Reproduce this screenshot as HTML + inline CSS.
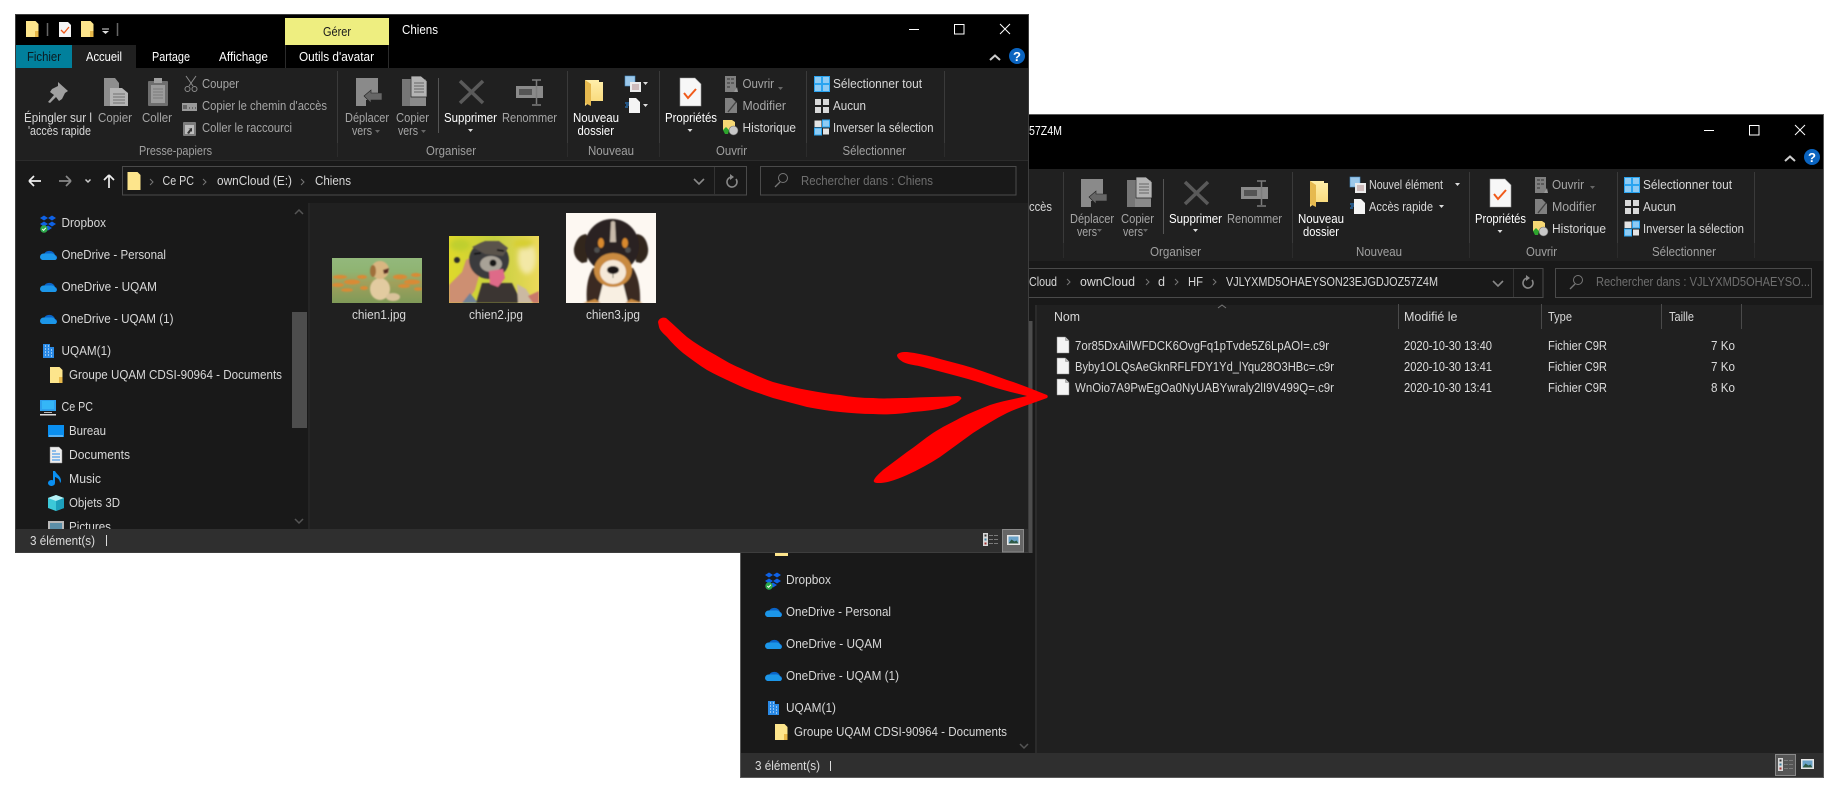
<!DOCTYPE html>
<html lang="fr"><head><meta charset="utf-8"><title>Chiens</title>
<style>
html,body{margin:0;padding:0;background:#fff;width:1830px;height:793px;overflow:hidden}
svg{display:block}
text{font-family:"Liberation Sans",sans-serif;font-size:13px;fill:#e4e4e4}
.w{fill:#fff}.d{fill:#a6a6a6}.g{fill:#a0a0a0}.k{fill:#1a1a1a}.m{fill:#6f6f6f}.n{fill:#dcdcdc}
.a{fill:#d8d8d8}
</style></head><body>
<svg width="1830" height="793" viewBox="0 0 1830 793" xmlns="http://www.w3.org/2000/svg">
<defs>
<linearGradient id="fy" x1="0" y1="0" x2="0" y2="1"><stop offset="0" stop-color="#ffeeaa"/><stop offset="1" stop-color="#f8d775"/></linearGradient>
<linearGradient id="c1" x1="0" y1="0" x2="0" y2="1"><stop offset="0" stop-color="#93b87c"/><stop offset=".3" stop-color="#8fb472"/><stop offset=".55" stop-color="#a0a05c"/><stop offset="1" stop-color="#7f9a58"/></linearGradient>
<linearGradient id="c2" x1="0" y1="0" x2="1" y2="0"><stop offset="0" stop-color="#dfd92a"/><stop offset=".5" stop-color="#c4cf3e"/><stop offset="1" stop-color="#ecd95a"/></linearGradient>
<filter id="b" x="-10%" y="-10%" width="120%" height="120%"><feGaussianBlur stdDeviation=".8"/></filter>
<filter id="b2" x="-20%" y="-20%" width="140%" height="140%"><feGaussianBlur stdDeviation="2.500"/></filter>
<clipPath id="cp1"><rect x="332" y="258" width="90" height="45"/></clipPath>
<clipPath id="cp2"><rect x="449" y="236" width="90" height="67"/></clipPath>
<clipPath id="cp3"><rect x="566" y="213" width="90" height="90"/></clipPath>
<clipPath id="navclip"><rect x="16" y="203" width="292" height="326"/></clipPath>

<g id="i-pin"><path d="M58 82l10 9-3 2-3 6-3 2-3-4-6 6-2-1 6-7-4-3 2-3 6-3z" fill="#a0a0a0"/></g>
<g id="i-copy"><path d="M104 78h11l4 5v7h-8v16h-7z" fill="#8e8e8e"/><path d="M110 88h12l6 5v13h-18z" fill="#b4b4b4"/><path d="M113 94h12M113 97h12M113 100h12M113 103h12" stroke="#707070" stroke-width="1"/></g>
<g id="i-paste"><rect x="148" y="81" width="20" height="25" rx="1" fill="#6e6e6e"/><rect x="154" y="78" width="8" height="5" fill="#a0a0a0"/><rect x="151" y="85" width="14" height="18" fill="#9c9c9c"/><path d="M153 89h10M153 92h10M153 95h10M153 98h10" stroke="#7c7c7c"/></g>
<g id="i-sc" fill="none" stroke="#8c8c8c" stroke-width="1"><path d="M186 76l7 10M196 76l-7 10"/><circle cx="187.500" cy="89" r="2.500"/><circle cx="194.500" cy="89" r="2.500"/></g>
<g id="i-pt"><rect x="182" y="103" width="15" height="8" fill="#9a9a9a"/><path d="M184 105v4M186 105v4M189 108h1M192 108h1M195 108h1" stroke="#333" stroke-width="1"/></g>
<g id="i-sh"><rect x="183" y="122" width="13" height="14" rx="1" fill="#7c7c7c"/><rect x="185" y="125" width="9" height="9" fill="#bdbdbd"/><path d="M187 133l3-4-2 0 4-1v4l-1-1-2 3z" fill="#333"/></g>
<g id="i-mv"><path d="M356 78h22v22h-12v6h-10z" fill="#8a8a8a"/><path d="M364 96l7-6v3h11v7h-11v3z" fill="#666" stroke="#202020" stroke-width=".6"/></g>
<g id="i-cp"><path d="M402 79h24v27h-24z" fill="#8a8a8a"/><path d="M402 79h8v27h-8z" fill="#767676"/><path d="M411 76h10l6 5v16h-16z" fill="#b4b4b4" stroke="#202020" stroke-width=".7"/><path d="M414 83h10M414 86h10M414 89h10M414 92h10" stroke="#666"/></g>
<g id="i-x"><path d="M460 81l23 22M483 81l-23 22" stroke="#5a5a5a" stroke-width="3.500" fill="none"/></g>
<g id="i-rn"><rect x="516" y="86" width="27" height="12" fill="#8a8a8a"/><rect x="519" y="89" width="13" height="6" fill="#555"/><path d="M532 80h9M536.500 80v24M532 105h9" stroke="#7c7c7c" stroke-width="1.500" fill="none"/></g>
<g id="i-fo"><path d="M585 80h14v2h4v19h-12l-6 5z" fill="url(#fy)"/><path d="M585 80l6 4v22l-6-3z" fill="#e6b94f"/></g>
<g id="i-ouv"><rect x="725" y="76" width="11" height="16" fill="#808080"/><path d="M727 79h3M727 83h3M727 87h3M731 79h3M731 83h3" stroke="#333"/><path d="M734 92l3-5 1 5z" fill="#999"/></g>
<g id="i-mod"><path d="M725 98h7l5 5v10h-12z" fill="#808080"/><path d="M728 112l8-10" stroke="#444" stroke-width="1.400"/></g>
<g id="i-his"><path d="M723 120h9l3 2v8h-12z" fill="#f5d774"/><circle cx="733.500" cy="130.500" r="4.500" fill="#c8c8c8" stroke="#666" stroke-width=".6"/><path d="M723 130l3-3 3 3-1 4h-3z" fill="#2da52d"/></g>
<g id="i-all" fill="#8ecbf4" stroke="#2aa4f0" stroke-width="1"><rect x="814.500" y="76.500" width="7" height="7"/><rect x="822.500" y="76.500" width="7" height="7"/><rect x="814.500" y="84.500" width="7" height="7"/><rect x="822.500" y="84.500" width="7" height="7"/></g>
<g id="i-non" fill="#d8d8d8"><rect x="815" y="99" width="6" height="6"/><rect x="823" y="99" width="6" height="6"/><rect x="815" y="107" width="6" height="6"/><rect x="823" y="107" width="6" height="6"/></g>
<g id="i-inv" stroke-width="1"><rect x="814.500" y="120.500" width="7" height="6.500" fill="#e4e4e4"/><rect x="822.500" y="120" width="7" height="7" fill="#8ecbf4" stroke="#2aa4f0"/><rect x="814.500" y="128" width="7" height="7" fill="#8ecbf4" stroke="#2aa4f0"/><rect x="823" y="128.500" width="6" height="6" fill="#e4e4e4"/></g>
<g id="i-prop"><path d="M680 78h15l6 6v22h-21z" fill="#f7f7f7" stroke="#9a9a9a" stroke-width=".6"/><path d="M684 93l4 5 8-9" fill="none" stroke="#f05a1a" stroke-width="2"/></g>
<g id="i-new"><rect x="625" y="76" width="10" height="10" fill="#9cc8ea" stroke="#4a8fc8" stroke-width=".6"/><rect x="630" y="82" width="11" height="10" fill="#ececec"/><path d="M632 85h7M632 87h7M632 89h7" stroke="#b08a8a"/></g>
<g id="i-eas"><path d="M629 98h7l4 4v11h-11z" fill="#f4f4f4"/><path d="M625 103h4M626 105h3M625 107h3" stroke="#2a8ae6"/></g>
<g id="i-dbx"><path d="M40 218l4-2.500 4 2.500-4 2.500zM48 218l4-2.500 4 2.500-4 2.500zM40 224l4-2.500 4 2.500-4 2.500zM48 224l4-2.500 4 2.500-4 2.500zM44 228l4-2.500 4 2.500-4 2.500z" fill="#0f62e6"/><circle cx="44" cy="229" r="3.700" fill="#2da84a"/><path d="M42.300 229l1.300 1.300 2.200-2.500" stroke="#fff" fill="none"/></g>
<g id="i-od"><path d="M44 260h10a2.500 2.500 0 0 0 1-5 6 6 0 0 0-11-1 4 4 0 0 0-2 6z" fill="#0a64c8"/><path d="M40 257a3.500 3.500 0 0 1 4-3.500h6a6 6 0 0 1 6 3 2 2 0 0 1-1 3.500H43a3 3 0 0 1-3-3z" fill="#1c96e8"/></g>
<g id="i-bld"><path d="M43 344h7v3h4v11H43z" fill="#2a8ae6"/><path d="M45 346h1M48 346h1M45 349h1M48 349h1M45 352h1M48 352h1M51 350h1M51 353h1M51 356h1M45 355h1M48 355h1" stroke="#fff"/></g>
<g id="i-fl"><path d="M50 367h9.500l3 3v13H50z" fill="#fde58c"/><path d="M59 383h3.500v-6H59z" fill="#e8b94a"/></g>
<g id="i-pc"><rect x="40" y="400" width="16" height="11" fill="#2ea0ee"/><path d="M42 401h12v8H42z" fill="#35b6f7"/><path d="M44 412h8v1H44z" fill="#bbb"/><path d="M40 414h16v1.500H40z" fill="#ddd"/></g>
<g id="i-de"><rect x="48" y="425" width="16" height="12" fill="#0a8ff0"/><path d="M49 436h14" stroke="#cdeaff" stroke-width=".8"/></g>
<g id="i-doc"><path d="M50 447h9l3 3v13H50z" fill="#eee" stroke="#888" stroke-width=".5"/><path d="M52 451h4M52 454h8M52 457h8M52 460h8" stroke="#2a8ae6"/></g>
<g id="i-mu"><path d="M55 471v12a3.500 3 0 1 1-2-2.700V471zM55 471c2 4 6 5 6 10 0 1-1 2-1 2 0-3-2-5-5-6z" fill="#0a8ff0"/></g>
<g id="i-3d"><path d="M56 495l8 3v10l-8 3-8-3v-10z" fill="#3cc8d8"/><path d="M48 498l8 3 8-3-8-3z" fill="#b6f0f4"/><path d="M56 501v10l8-3v-10z" fill="#1da0bc"/></g>
<g id="i-file"><path d="M0 0h8.500l3.500 3.500V16H0z" fill="#f4f4f4" stroke="#8a8a8a" stroke-width=".5"/><path d="M8.500 0v3.500H12" fill="#bbb" stroke="#8a8a8a" stroke-width=".5"/></g>
<g id="i-list"><rect x="0" y="0" width="5" height="13" fill="#d8d8d8"/><rect x="1.500" y="1.500" width="2" height="2" fill="#333"/><rect x="1.500" y="5.500" width="2" height="2" fill="#3a7a9a"/><rect x="1.500" y="9.500" width="2" height="2" fill="#a03030"/><path d="M6 2.500h4M11 2.500h4M6 6.500h4M11 6.500h4M6 10.500h4M11 10.500h4" stroke="#7a7a7a"/></g>
<g id="i-big"><rect x="0" y="0" width="13" height="10" fill="#e8e8e8"/><rect x="1.500" y="1.500" width="10" height="7" fill="#6aa2c8"/><path d="M1.500 8.500l3-4 3 2 2-1 2 3z" fill="#2e5a46"/></g>
</defs>

<rect width="1830" height="793" fill="#fff"/>

<!-- WINDOW 2 -->
<rect x="740" y="114" width="1084" height="664" fill="#5a5a5a"/>
<rect x="741" y="115" width="1082" height="54" fill="#000"/>
<rect x="741" y="169" width="1082" height="92" fill="#202020"/>
<rect x="741" y="261" width="1082" height="44" fill="#191919"/>
<rect x="741" y="305" width="294" height="448" fill="#191919"/>
<rect x="1035" y="305" width="788" height="448" fill="#202020"/>
<rect x="1035" y="305" width="2" height="448" fill="#2b2b2b"/>
<rect x="1029" y="321" width="3.500" height="232" fill="#4d4d4d"/>
<rect x="741" y="753" width="1082" height="24" fill="#2f2f2f"/>

<text x="1029" y="135" textLength="33" lengthAdjust="spacingAndGlyphs" class="w">57Z4M</text>
<path d="M1704 130.500h10" stroke="#fff"/><rect x="1749.500" y="125.500" width="9.500" height="9.500" fill="none" stroke="#fff"/><path d="M1795 125l10 10M1805 125l-10 10" stroke="#fff"/>
<path d="M1785 161l5-4.500 5 4.500" stroke="#ccc" stroke-width="2" fill="none"/>
<circle cx="1812" cy="157" r="8" fill="#0a64c0"/><text x="1808" y="162" textLength="8" lengthAdjust="spacingAndGlyphs" class="w" style="font-weight:700">?</text>

<g stroke="#3a3a3a"><path d="M1063.500 172v71M1292.500 172v71M1469.500 172v71M1617.500 172v71M1754.500 172v71"/><path d="M1163.500 179v55" stroke="#555"/></g>
<g stroke="#2c2c2c"><path d="M1063.500 243v15M1292.500 243v15M1469.500 243v15M1617.500 243v15M1754.500 243v15"/></g>
<g transform="translate(725,101)"><use href="#i-mv"/><use href="#i-cp"/><use href="#i-x"/><use href="#i-rn"/><use href="#i-fo"/><use href="#i-new"/><use href="#i-eas"/></g>
<g transform="translate(810,101)"><use href="#i-prop"/><use href="#i-ouv"/><use href="#i-mod"/><use href="#i-his"/><use href="#i-all"/><use href="#i-non"/><use href="#i-inv"/></g>
<text x="1029" y="211" textLength="23" lengthAdjust="spacingAndGlyphs" class="a">ccès</text>
<text x="1070" y="223" textLength="44" lengthAdjust="spacingAndGlyphs" class="d">Déplacer</text>
<text x="1077" y="236" textLength="20" lengthAdjust="spacingAndGlyphs" class="d">vers</text>
<text x="1121" y="223" textLength="33" lengthAdjust="spacingAndGlyphs" class="d">Copier</text>
<text x="1123" y="236" textLength="20" lengthAdjust="spacingAndGlyphs" class="d">vers</text>
<text x="1169" y="223" textLength="53" lengthAdjust="spacingAndGlyphs" class="w">Supprimer</text>
<text x="1227" y="223" textLength="55" lengthAdjust="spacingAndGlyphs" class="d">Renommer</text>
<text x="1298" y="223" textLength="46" lengthAdjust="spacingAndGlyphs" class="w">Nouveau</text>
<text x="1303" y="236" textLength="36" lengthAdjust="spacingAndGlyphs" class="w">dossier</text>
<text x="1369" y="189" textLength="74" lengthAdjust="spacingAndGlyphs" class="a">Nouvel élément</text>
<text x="1369" y="211" textLength="64" lengthAdjust="spacingAndGlyphs" class="a">Accès rapide</text>
<path d="M1455 183h5l-2.500 3zM1439 205h5l-2.500 3zM1497.500 230h5l-2.500 3zM1193 229h5l-2.500 3z" fill="#ddd"/>
<path d="M1097 229h5l-2.500 3zM1143 229h5l-2.500 3zM1590 186h5l-2.500 3z" fill="#666"/>
<text x="1475" y="223" textLength="51" lengthAdjust="spacingAndGlyphs" class="w">Propriétés</text>
<text x="1552" y="189" textLength="32" lengthAdjust="spacingAndGlyphs" class="d">Ouvrir</text>
<text x="1552" y="211" textLength="44" lengthAdjust="spacingAndGlyphs" class="d">Modifier</text>
<text x="1552" y="233" textLength="54" lengthAdjust="spacingAndGlyphs" class="a">Historique</text>
<text x="1643" y="189" textLength="89" lengthAdjust="spacingAndGlyphs" class="a">Sélectionner tout</text>
<text x="1643" y="211" textLength="33" lengthAdjust="spacingAndGlyphs" class="a">Aucun</text>
<text x="1643" y="233" textLength="101" lengthAdjust="spacingAndGlyphs" class="a">Inverser la sélection</text>
<text x="1150" y="256" textLength="51" lengthAdjust="spacingAndGlyphs" class="g">Organiser</text>
<text x="1356" y="256" textLength="46" lengthAdjust="spacingAndGlyphs" class="g">Nouveau</text>
<text x="1526" y="256" textLength="31" lengthAdjust="spacingAndGlyphs" class="g">Ouvrir</text>
<text x="1652" y="256" textLength="64" lengthAdjust="spacingAndGlyphs" class="g">Sélectionner</text>

<rect x="1000" y="268.500" width="543" height="29" fill="none" stroke="#4a4a4a"/>
<path d="M1513.500 269v28" stroke="#333"/>
<text x="1029" y="286" textLength="28" lengthAdjust="spacingAndGlyphs" class="a">Cloud</text>
<path d="M1067 279l3 3-3 3M1146 279l3 3-3 3M1175 279l3 3-3 3M1213 279l3 3-3 3" stroke="#777" fill="none"/>
<text x="1080" y="286" textLength="55" lengthAdjust="spacingAndGlyphs" class="a">ownCloud</text>
<text x="1158" y="286" textLength="7" lengthAdjust="spacingAndGlyphs" class="a">d</text>
<text x="1188" y="286" textLength="15" lengthAdjust="spacingAndGlyphs" class="a">HF</text>
<text x="1226" y="286" textLength="212" lengthAdjust="spacingAndGlyphs" class="a">VJLYXMD5OHAEYSON23EJGDJOZ57Z4M</text>
<path d="M1493 281l5 5 5-5" stroke="#888" stroke-width="1.600" fill="none"/>
<path d="M1532 280a5 5 0 1 1-4-2" stroke="#888" stroke-width="1.600" fill="none"/><path d="M1526 275l4 3-4 3z" fill="#888"/>
<rect x="1555.500" y="268.500" width="256" height="29" fill="none" stroke="#4a4a4a"/>
<circle cx="1578" cy="280" r="4.500" fill="none" stroke="#777"/><path d="M1575 284l-5 5" stroke="#777" stroke-width="1.300"/>
<text x="1596" y="286" textLength="214" lengthAdjust="spacingAndGlyphs" class="m">Rechercher dans : VJLYXMD5OHAEYSO...</text>

<path d="M1218 308l4-3 4 3" stroke="#777" fill="none"/>
<text x="1054" y="321" textLength="26" lengthAdjust="spacingAndGlyphs" class="a">Nom</text>
<text x="1404" y="321" textLength="53.500" lengthAdjust="spacingAndGlyphs" class="a">Modifié le</text>
<text x="1548" y="321" textLength="24" lengthAdjust="spacingAndGlyphs" class="a">Type</text>
<text x="1669" y="321" textLength="25" lengthAdjust="spacingAndGlyphs" class="a">Taille</text>
<path d="M1398.500 304v25M1541.500 304v25M1661.500 304v25M1741.500 304v25" stroke="#4a4a4a"/>
<use href="#i-file" x="1057" y="337"/><use href="#i-file" x="1057" y="358"/><use href="#i-file" x="1057" y="379"/>
<text x="1075" y="350" textLength="254" lengthAdjust="spacingAndGlyphs" class="a">7or85DxAilWFDCK6OvgFq1pTvde5Z6LpAOI=.c9r</text>
<text x="1075" y="371" textLength="259" lengthAdjust="spacingAndGlyphs" class="a">Byby1OLQsAeGknRFLFDY1Yd_lYqu28O3HBc=.c9r</text>
<text x="1075" y="392" textLength="259" lengthAdjust="spacingAndGlyphs" class="a">WnOio7A9PwEgOa0NyUABYwraly2lI9V499Q=.c9r</text>
<text x="1404" y="350" textLength="88" lengthAdjust="spacingAndGlyphs" class="n">2020-10-30 13:40</text>
<text x="1404" y="371" textLength="88" lengthAdjust="spacingAndGlyphs" class="n">2020-10-30 13:41</text>
<text x="1404" y="392" textLength="88" lengthAdjust="spacingAndGlyphs" class="n">2020-10-30 13:41</text>
<text x="1548" y="350" textLength="59" lengthAdjust="spacingAndGlyphs" class="n">Fichier C9R</text>
<text x="1548" y="371" textLength="59" lengthAdjust="spacingAndGlyphs" class="n">Fichier C9R</text>
<text x="1548" y="392" textLength="59" lengthAdjust="spacingAndGlyphs" class="n">Fichier C9R</text>
<text x="1711" y="350" textLength="24" lengthAdjust="spacingAndGlyphs" class="n">7 Ko</text>
<text x="1711" y="371" textLength="24" lengthAdjust="spacingAndGlyphs" class="n">7 Ko</text>
<text x="1711" y="392" textLength="24" lengthAdjust="spacingAndGlyphs" class="n">8 Ko</text>

<g transform="translate(725,357)"><use href="#i-dbx"/><use href="#i-od"/><use href="#i-od" y="32"/><use href="#i-od" y="64"/><use href="#i-bld"/><use href="#i-fl"/></g>
<text x="786" y="584" textLength="45" lengthAdjust="spacingAndGlyphs" class="a">Dropbox</text>
<text x="786" y="616" textLength="105" lengthAdjust="spacingAndGlyphs" class="a">OneDrive - Personal</text>
<text x="786" y="648" textLength="96" lengthAdjust="spacingAndGlyphs" class="a">OneDrive - UQAM</text>
<text x="786" y="680" textLength="113" lengthAdjust="spacingAndGlyphs" class="a">OneDrive - UQAM (1)</text>
<text x="786" y="712" textLength="50" lengthAdjust="spacingAndGlyphs" class="a">UQAM(1)</text>
<text x="794" y="736" textLength="213" lengthAdjust="spacingAndGlyphs" class="a">Groupe UQAM CDSI-90964 - Documents</text>
<path d="M1020 744l4 4 4-4" stroke="#555" stroke-width="1.500" fill="none"/>
<rect x="775" y="553" width="13" height="3" fill="#fde58c"/>
<text x="755" y="770" textLength="65" lengthAdjust="spacingAndGlyphs" class="n">3 élément(s)</text>
<path d="M830.500 761v10" stroke="#ddd"/>
<rect x="1775.500" y="754.500" width="20" height="21" fill="#555" stroke="#888"/>
<use href="#i-list" x="1778" y="758"/><use href="#i-big" x="1801" y="759"/>

<!-- WINDOW 1 -->
<rect x="15" y="14" width="1014" height="539" fill="#3d3d3d"/>
<rect x="16" y="15" width="1012" height="53" fill="#000"/>
<rect x="16" y="68" width="1012" height="92" fill="#202020"/>
<rect x="16" y="160" width="1012" height="43" fill="#191919"/>
<rect x="16" y="203" width="292" height="326" fill="#191919"/>
<rect x="308" y="203" width="720" height="326" fill="#202020"/>
<rect x="308" y="203" width="2" height="326" fill="#252525"/>
<rect x="16" y="529" width="1012" height="23" fill="#2f2f2f"/>
<path d="M16 160.500h1012" stroke="#2b2b2b"/>

<use href="#i-fl" transform="translate(-24,-346)"/>
<path d="M47.500 23v13" stroke="#666" stroke-width="1.500"/><path d="M117.500 23v13" stroke="#666" stroke-width="1.500"/>
<path d="M59 22h9l3 3v12H59z" fill="#f4f4f4"/><path d="M61 30l3 3 5-6" stroke="#f05a1a" stroke-width="1.300" fill="none"/>
<use href="#i-fl" transform="translate(31,-346)"/>
<path d="M102 29h7" stroke="#ddd"/><path d="M102 31h7l-3.500 3z" fill="#ddd"/>

<rect x="285" y="18" width="104" height="27" fill="#eeee80"/>
<path d="M285.500 45v23M388.500 45v23" stroke="#2b2b2b"/>
<text x="323" y="36" textLength="28" lengthAdjust="spacingAndGlyphs" class="k">Gérer</text>
<text x="402" y="34" textLength="36" lengthAdjust="spacingAndGlyphs" class="w">Chiens</text>
<rect x="16" y="45" width="56" height="23" fill="#01809c"/>
<rect x="72" y="45" width="64" height="23" fill="#202020"/>
<text x="27" y="61" textLength="34" lengthAdjust="spacingAndGlyphs" style="fill:#0b1a20">Fichier</text>
<text x="86" y="61" textLength="36" lengthAdjust="spacingAndGlyphs" class="w">Accueil</text>
<text x="152" y="61" textLength="38" lengthAdjust="spacingAndGlyphs" class="w">Partage</text>
<text x="219" y="61" textLength="49" lengthAdjust="spacingAndGlyphs" class="w">Affichage</text>
<text x="299" y="61" textLength="75" lengthAdjust="spacingAndGlyphs" class="w">Outils d'avatar</text>

<path d="M909 29.500h10" stroke="#fff"/><rect x="954.500" y="24.500" width="9.500" height="9.500" fill="none" stroke="#fff"/><path d="M1000 24l10 10M1010 24l-10 10" stroke="#fff"/>
<path d="M990 60l5-4.500 5 4.500" stroke="#ccc" stroke-width="2" fill="none"/>
<circle cx="1017" cy="56" r="8" fill="#0a64c0"/><text x="1013" y="61" textLength="8" lengthAdjust="spacingAndGlyphs" class="w" style="font-weight:700">?</text>

<g stroke="#3a3a3a"><path d="M337.500 71v72M567.500 71v72M659.500 71v72M806.500 71v72M944.500 71v72"/><path d="M438.500 78v55" stroke="#555"/></g>
<g stroke="#2c2c2c"><path d="M337.500 143v14M567.500 143v14M659.500 143v14M806.500 143v14M944.500 143v14"/></g>

<use href="#i-pin"/><use href="#i-copy"/><use href="#i-paste"/><use href="#i-sc"/><use href="#i-pt"/><use href="#i-sh"/>
<use href="#i-mv"/><use href="#i-cp"/><use href="#i-x"/><use href="#i-rn"/><use href="#i-fo"/><use href="#i-new"/><use href="#i-eas"/>
<use href="#i-prop"/><use href="#i-ouv"/><use href="#i-mod"/><use href="#i-his"/><use href="#i-all"/><use href="#i-non"/><use href="#i-inv"/>
<path d="M643 82h5l-2.500 3zM643 104h5l-2.500 3zM687.500 129h5l-2.500 3zM468 129h5l-2.500 3z" fill="#ddd"/>
<path d="M375 130h5l-2.500 3zM421 130h5l-2.500 3zM778 87h5l-2.500 3z" fill="#666"/>

<text x="202" y="88" textLength="37" lengthAdjust="spacingAndGlyphs" class="d">Couper</text>
<text x="202" y="110" textLength="125" lengthAdjust="spacingAndGlyphs" class="d">Copier le chemin d'accès</text>
<text x="202" y="132" textLength="90" lengthAdjust="spacingAndGlyphs" class="d">Coller le raccourci</text>
<text x="24" y="122" textLength="68" lengthAdjust="spacingAndGlyphs" class="a">Épingler sur l</text>
<text x="28" y="135" textLength="63" lengthAdjust="spacingAndGlyphs" class="a">'accès rapide</text>
<text x="98" y="122" textLength="34" lengthAdjust="spacingAndGlyphs" class="d">Copier</text>
<text x="142" y="122" textLength="30" lengthAdjust="spacingAndGlyphs" class="d">Coller</text>
<text x="345" y="122" textLength="44" lengthAdjust="spacingAndGlyphs" class="d">Déplacer</text>
<text x="352" y="135" textLength="20" lengthAdjust="spacingAndGlyphs" class="d">vers</text>
<text x="396" y="122" textLength="33" lengthAdjust="spacingAndGlyphs" class="d">Copier</text>
<text x="398" y="135" textLength="20" lengthAdjust="spacingAndGlyphs" class="d">vers</text>
<text x="444" y="122" textLength="53" lengthAdjust="spacingAndGlyphs" class="w">Supprimer</text>
<text x="502" y="122" textLength="55" lengthAdjust="spacingAndGlyphs" class="d">Renommer</text>
<text x="573" y="122" textLength="46" lengthAdjust="spacingAndGlyphs" class="w">Nouveau</text>
<text x="577.500" y="135" textLength="36.500" lengthAdjust="spacingAndGlyphs" class="w">dossier</text>
<text x="665" y="122" textLength="52" lengthAdjust="spacingAndGlyphs" class="w">Propriétés</text>
<text x="742.500" y="88" textLength="31.500" lengthAdjust="spacingAndGlyphs" class="d">Ouvrir</text>
<text x="742.500" y="110" textLength="43.500" lengthAdjust="spacingAndGlyphs" class="d">Modifier</text>
<text x="742.500" y="132" textLength="53.500" lengthAdjust="spacingAndGlyphs" class="a">Historique</text>
<text x="833" y="88" textLength="89" lengthAdjust="spacingAndGlyphs" class="a">Sélectionner tout</text>
<text x="833" y="110" textLength="33" lengthAdjust="spacingAndGlyphs" class="a">Aucun</text>
<text x="833" y="132" textLength="100.500" lengthAdjust="spacingAndGlyphs" class="a">Inverser la sélection</text>
<text x="139" y="155" textLength="73" lengthAdjust="spacingAndGlyphs" class="g">Presse-papiers</text>
<text x="426" y="155" textLength="50" lengthAdjust="spacingAndGlyphs" class="g">Organiser</text>
<text x="588" y="155" textLength="46" lengthAdjust="spacingAndGlyphs" class="g">Nouveau</text>
<text x="716" y="155" textLength="31" lengthAdjust="spacingAndGlyphs" class="g">Ouvrir</text>
<text x="842.500" y="155" textLength="63.500" lengthAdjust="spacingAndGlyphs" class="g">Sélectionner</text>

<path d="M29 181h12M29 181l5-5M29 181l5 5" stroke="#eee" stroke-width="1.700" fill="none"/>
<path d="M71 181H59M71 181l-5-5M71 181l-5 5" stroke="#888" stroke-width="1.700" fill="none"/>
<path d="M85.500 179.500l2.500 2.500 2.500-2.500" stroke="#ccc" stroke-width="1.500" fill="none"/>
<path d="M109 188v-13M109 175l-5 5M109 175l5 5" stroke="#eee" stroke-width="1.700" fill="none"/>
<rect x="122.500" y="166.500" width="624" height="28.500" fill="none" stroke="#4a4a4a"/>
<path d="M127.500 172h10l3 3v15h-13z" fill="#fde58c"/>
<path d="M150 179l3 3-3 3M203 179l3 3-3 3M301 179l3 3-3 3" stroke="#777" fill="none"/>
<text x="162.500" y="185" textLength="31.500" lengthAdjust="spacingAndGlyphs" class="a">Ce PC</text>
<text x="217" y="185" textLength="75" lengthAdjust="spacingAndGlyphs" class="a">ownCloud (E:)</text>
<text x="315" y="185" textLength="36" lengthAdjust="spacingAndGlyphs" class="a">Chiens</text>
<path d="M714.500 167v28" stroke="#333"/>
<path d="M694 179l5 5 5-5" stroke="#888" stroke-width="1.600" fill="none"/>
<path d="M736 179a5 5 0 1 1-4-2" stroke="#888" stroke-width="1.600" fill="none"/><path d="M730 174l4 3-4 3z" fill="#888"/>
<rect x="760.500" y="166.500" width="255.500" height="28.500" fill="none" stroke="#4a4a4a"/>
<circle cx="783" cy="178" r="4.500" fill="none" stroke="#777"/><path d="M780 182l-5 5" stroke="#777" stroke-width="1.300"/>
<text x="801" y="185" textLength="132" lengthAdjust="spacingAndGlyphs" class="m">Rechercher dans : Chiens</text>

<rect x="292" y="312" width="15" height="116" fill="#4d4d4d"/>
<path d="M295 214l4-4 4 4M295 519l4 4 4-4" stroke="#555" stroke-width="1.500" fill="none"/>

<use href="#i-dbx"/><use href="#i-od"/><use href="#i-od" y="32"/><use href="#i-od" y="64"/><use href="#i-bld"/><use href="#i-fl"/><use href="#i-pc"/><use href="#i-de"/><use href="#i-doc"/><use href="#i-mu"/><use href="#i-3d"/>
<rect x="48" y="521" width="16" height="8" fill="#b8b8b8"/><rect x="50" y="523" width="12" height="6" fill="#5c8fa8"/>
<text x="61.500" y="227" textLength="44.500" lengthAdjust="spacingAndGlyphs" class="a">Dropbox</text>
<text x="61.500" y="259" textLength="104.500" lengthAdjust="spacingAndGlyphs" class="a">OneDrive - Personal</text>
<text x="61.500" y="291" textLength="95.500" lengthAdjust="spacingAndGlyphs" class="a">OneDrive - UQAM</text>
<text x="61.500" y="323" textLength="112" lengthAdjust="spacingAndGlyphs" class="a">OneDrive - UQAM (1)</text>
<text x="61.500" y="355" textLength="49.500" lengthAdjust="spacingAndGlyphs" class="a">UQAM(1)</text>
<text x="69" y="379" textLength="213" lengthAdjust="spacingAndGlyphs" class="a">Groupe UQAM CDSI-90964 - Documents</text>
<text x="61.500" y="411" textLength="31.500" lengthAdjust="spacingAndGlyphs" class="a">Ce PC</text>
<text x="69" y="435" textLength="37" lengthAdjust="spacingAndGlyphs" class="a">Bureau</text>
<text x="69" y="459" textLength="61" lengthAdjust="spacingAndGlyphs" class="a">Documents</text>
<text x="69" y="483" textLength="32" lengthAdjust="spacingAndGlyphs" class="a">Music</text>
<text x="69" y="507" textLength="51" lengthAdjust="spacingAndGlyphs" class="a">Objets 3D</text>
<g clip-path="url(#navclip)"><text x="69" y="531" textLength="42" lengthAdjust="spacingAndGlyphs" class="a">Pictures</text></g>

<!-- chien1 -->
<g clip-path="url(#cp1)"><rect x="332" y="258" width="90" height="45" fill="url(#c1)"/>
<g filter="url(#b)" fill="#d98a35">
<ellipse cx="340" cy="277" rx="7" ry="2"/><ellipse cx="352" cy="282" rx="8" ry="2.500"/><ellipse cx="338" cy="285" rx="6" ry="2"/><ellipse cx="362" cy="277" rx="5" ry="2"/><ellipse cx="347" cy="290" rx="6" ry="1.800"/><ellipse cx="364" cy="288" rx="4" ry="2"/>
<ellipse cx="400" cy="277" rx="7" ry="2.500"/><ellipse cx="412" cy="282" rx="8" ry="2.500"/><ellipse cx="404" cy="286" rx="6" ry="2"/><ellipse cx="416" cy="275" rx="5" ry="2"/><ellipse cx="418" cy="289" rx="4" ry="1.800"/>
</g>
<g filter="url(#b)"><ellipse cx="380" cy="289" rx="10" ry="11" fill="#e2cba0"/><ellipse cx="393" cy="297" rx="7" ry="4" fill="#d9c29a"/><ellipse cx="380" cy="270" rx="9" ry="9" fill="#d9b681"/><ellipse cx="373" cy="271" rx="3" ry="6" fill="#a0703a"/><path d="M383 270l6-2-1 5-4 1z" fill="#5a2a20"/></g></g>
<!-- chien2 -->
<g clip-path="url(#cp2)"><rect x="449" y="236" width="90" height="67" fill="url(#c2)"/>
<g filter="url(#b2)"><ellipse cx="527" cy="258" rx="9" ry="16" fill="#f3e8a6"/><ellipse cx="460" cy="245" rx="10" ry="6" fill="#bfcf2e"/><ellipse cx="523" cy="244" rx="10" ry="5" fill="#d7cf30"/></g>
<g filter="url(#b)">
<path d="M449 303v-18l13-13 4-12q6-4 10 0l3 16-4 14-9 13z" fill="#cd8f72"/><path d="M462 303l8-10 8 10z" fill="#6f8296"/>
<path d="M476 303l6-20 30 0 10 20z" fill="#3a3532"/><path d="M517 284l9 5 7 11-2 3h-13z" fill="#cbb9a2"/><path d="M528 296l11-5v12h-6z" fill="#c9786a"/>
<ellipse cx="457" cy="260" rx="3" ry="3" fill="#2a2a2a"/>
<ellipse cx="489" cy="260" rx="20" ry="19" fill="#3a3b3c"/><path d="M472 247l13-6 14 0 9 7-5 8-18-2z" fill="#5a524c"/><ellipse cx="491" cy="264" rx="11" ry="8" fill="#a8a297"/><circle cx="493" cy="263" r="3.500" fill="#141414"/><path d="M489 271l14-2 2 9-7 9-8-3z" fill="#de6a88"/><path d="M474 254l7-1M497 250l7 1" stroke="#111" stroke-width="1.800"/></g></g>
<!-- chien3 -->
<g clip-path="url(#cp3)"><rect x="566" y="213" width="90" height="90" fill="#fdf8f2"/>
<g filter="url(#b)"><path d="M587 303q-2-22 6-35h40q8 13 7 35z" fill="#3a2a20"/><path d="M598 303l5-20h20l5 20z" fill="#f8efe2"/><path d="M583 303l12-4 6 4zM643 303l-12-4-6 4z" fill="#c98a3f"/>
<path d="M574 248q3-13 12-14l4 6-3 22-5 1q-9-5-8-15zM648 248q-2-13-11-14l-4 6 3 22 5 1q8-5 7-15z" fill="#30251f"/>
<ellipse cx="612" cy="246" rx="27" ry="27" fill="#2c2421"/><path d="M611 222l2-1 2 1 1 20h-6z" fill="#c8baaa"/>
<ellipse cx="601" cy="243" rx="3" ry="5" fill="#d8892e"/><ellipse cx="625" cy="243" rx="3" ry="5" fill="#d8892e"/>
<circle cx="597" cy="250" r="2.800" fill="#505050"/><circle cx="628" cy="250" r="2.800" fill="#505050"/>
<ellipse cx="613" cy="270" rx="19" ry="17" fill="#c98a3f"/><ellipse cx="613" cy="272" rx="13" ry="12" fill="#f5e8d8"/><ellipse cx="613" cy="270" rx="6" ry="4" fill="#1a1414"/><path d="M613 274v4" stroke="#665"/></g></g>
<text x="352" y="319" textLength="54" lengthAdjust="spacingAndGlyphs" class="a">chien1.jpg</text>
<text x="469" y="319" textLength="54" lengthAdjust="spacingAndGlyphs" class="a">chien2.jpg</text>
<text x="586" y="319" textLength="54" lengthAdjust="spacingAndGlyphs" class="a">chien3.jpg</text>

<text x="30" y="545" textLength="65" lengthAdjust="spacingAndGlyphs" class="n">3 élément(s)</text>
<path d="M106.500 535v11" stroke="#ddd"/>
<use href="#i-list" x="983" y="533"/>
<rect x="1002.500" y="529.500" width="21" height="22.500" fill="#666" stroke="#8a8a8a"/>
<use href="#i-big" x="1007" y="535"/>

<!-- ARROW -->
<path d="M658 322C659 318 663 317 666 318C672 323 680 331 687 337C695 343 703 348 712 353C721 358 730 364 740 368C751 373 762 378 773 382C784 385 796 388 807 390C818 392 829 394 840 395C851 397 862 398 873 398C884 399 896 398 907 398C924 397 940 397 957 396C961 396 962 398 961 399C958 403 952 405 947 407C936 410 925 411 913 412C900 414 886 415 873 414C862 414 851 413 840 412C829 411 818 409 807 407C796 404 784 401 773 398C762 394 751 391 740 386C729 381 718 376 707 370C699 365 691 359 683 353C677 348 672 343 667 337C664 334 660 331 659 327Z" fill="#f00"/>
<path d="M897 355C899 352 903 352 907 352C916 353 925 355 933 357C947 361 960 364 973 368C985 372 996 376 1007 380C1020 384 1034 390 1047 395C1048 396 1048 397 1047 398C1034 403 1020 407 1007 413C995 419 984 426 973 433C962 441 951 449 940 457C929 464 918 470 907 475C898 479 888 483 878 483C875 483 873 482 874 480C876 476 880 473 883 470C891 464 899 458 907 452C916 446 924 439 933 433C942 427 951 423 960 418C970 413 980 409 990 405C1002 401 1015 399 1027 396C1015 393 1002 390 990 386C979 382 968 379 957 376C946 373 934 370 923 367C916 365 909 365 903 362C900 360 897 358 897 355Z" fill="#f00"/>
</svg>
</body></html>
